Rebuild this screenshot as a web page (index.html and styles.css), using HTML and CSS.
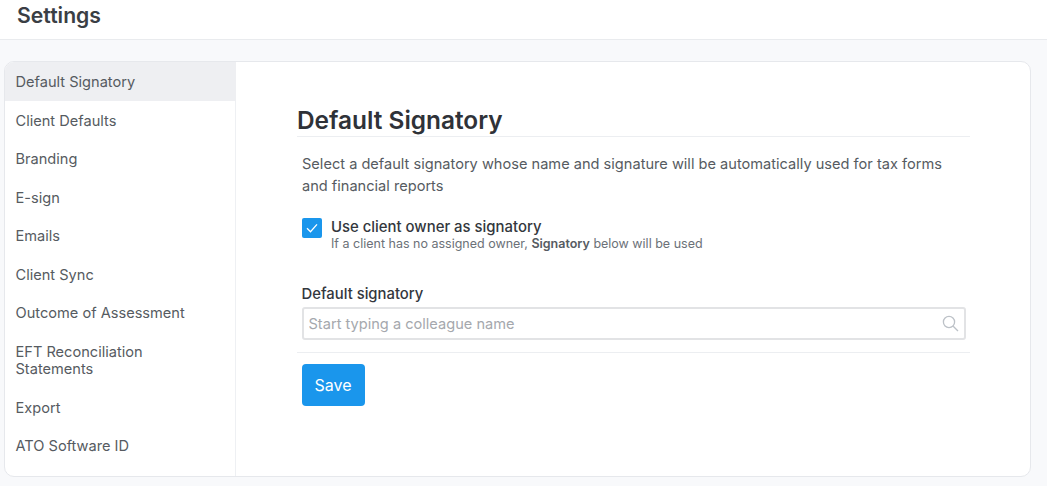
FILE: index.html
```html
<!DOCTYPE html>
<html lang="en">
<head>
  <meta charset="UTF-8" />
  <title>Settings</title>
  <meta name="viewport" content="width=device-width, initial-scale=1.0"/>
  <link rel="stylesheet" href="styles.css">
</head>
<body>
  <header class="page-header">
    <h1>Settings</h1>
  </header>

  <div class="settings-card">
    <nav class="side-nav">
      <a class="nav-item active" href="#">Default Signatory</a>
      <a class="nav-item" href="#">Client Defaults</a>
      <a class="nav-item" href="#">Branding</a>
      <a class="nav-item" href="#">E-sign</a>
      <a class="nav-item" href="#">Emails</a>
      <a class="nav-item" href="#">Client Sync</a>
      <a class="nav-item" href="#">Outcome of Assessment</a>
      <a class="nav-item" href="#">EFT Reconciliation Statements</a>
      <a class="nav-item" href="#">Export</a>
      <a class="nav-item" href="#">ATO Software ID</a>
    </nav>

    <main class="content">
      <h2>Default Signatory</h2>
      <p class="intro">Select a default signatory whose name and signature will be automatically used for tax forms and financial reports</p>

      <div class="check-row">
        <span class="checkbox">
          <svg width="12" height="12" viewBox="0 0 12 12" fill="none" stroke="#fff" stroke-width="1.3">
            <path d="M1 6.3 L4.5 9.8 L11 2.4"/>
          </svg>
        </span>
        <div>
          <div class="check-label">Use client owner as signatory</div>
          <div class="check-help">If a client has no assigned owner, <b>Signatory</b> below will be used</div>
        </div>
      </div>

      <label class="field-label" for="signatory">Default signatory</label>
      <div class="search-box">
        <input type="text" id="signatory" placeholder="Start typing a colleague name" />
        <svg width="17" height="17" viewBox="0 0 17 17" fill="none" stroke="#bcc1c7" stroke-width="1.3">
          <circle cx="7" cy="7" r="5.6"/>
          <path d="M11.2 11.2 L16 16"/>
        </svg>
      </div>

      <div class="actions">
        <button type="button">Save</button>
      </div>
    </main>
  </div>
</body>
</html>
```

FILE: styles.css
```css
:root {
  --bg: #f8f9fb;
  --border: #e6e8ec;
  --text: #33373d;
  --muted: #6c7178;
  --blue: #1a96ec;
}
* {
  box-sizing: border-box;
}
body {
  font-family: 'Inter', sans-serif;
  background-color: var(--bg);
  color: var(--text);
  margin: 0;
  height: 486px;
  overflow: hidden;
}
.page-header {
  background-color: #fff;
  height: 40px;
  border-bottom: 1px solid #e9ebee;
  padding-left: 17px;
}
.page-header h1 {
  margin: 0;
  font-size: 21.2px;
  font-weight: 600;
  line-height: 31px;
  color: #3a3e44;
}
.settings-card {
  display: flex;
  width: 1027px;
  height: 416px;
  margin: 21px 0 0 4px;
  background-color: #fff;
  border: 1px solid var(--border);
  border-radius: 10px;
  overflow: hidden;
}
.side-nav {
  width: 231px;
  flex-shrink: 0;
  border-right: 1px solid #eef0f3;
}
.nav-item {
  display: block;
  padding: 12px 30px 9px 10.5px;
  font-size: 14.6px;
  line-height: 17.5px;
  color: #565b61;
  text-decoration: none;
  margin-right: -1px;
}
.nav-item.active {
  background-color: #eeeff2;
}
.content {
  flex: 1;
  padding: 41px 60px 0 61px;
}
h2 {
  margin: 0;
  font-size: 24.4px;
  font-weight: 600;
  line-height: 35px;
  height: 34px;
  color: #2f3238;
  border-bottom: 1px solid #eceef1;
  width: 673px;
}
.intro {
  margin: 16px 0 0 5px;
  width: 660px;
  font-size: 14.6px;
  line-height: 22px;
  color: #565b61;
}
.check-row {
  display: flex;
  gap: 9px;
  margin: 20px 0 0 5px;
}
.checkbox {
  display: flex;
  align-items: center;
  justify-content: center;
  width: 20px;
  height: 20px;
  margin-top: 1px;
  background-color: var(--blue);
  border-radius: 2px;
}
.check-label {
  padding-top: 1px;
  font-size: 14.9px;
  font-weight: 500;
  line-height: 18px;
  color: var(--text);
}
.check-help {
  font-size: 12.5px;
  line-height: 16px;
  color: var(--muted);
}
.check-help b {
  font-weight: 600;
  color: #565b62;
}
.field-label {
  display: block;
  margin: 33px 0 0 4.5px;
  font-size: 14.85px;
  font-weight: 500;
  line-height: 18px;
  color: var(--text);
}
.search-box {
  display: flex;
  align-items: center;
  width: 664px;
  height: 33px;
  margin: 4px 0 0 5px;
  padding-right: 5px;
  border: 2px solid #e2e3e5;
  border-radius: 3px;
}
.search-box input {
  flex: 1;
  border: none;
  outline: none;
  padding: 0 4.5px;
  font-family: inherit;
  font-size: 14.6px;
  color: var(--text);
}
.search-box input::placeholder {
  color: #a5a8ad;
  opacity: 1;
}
.actions {
  width: 673px;
  margin-top: 12px;
  padding: 11px 0 0 5px;
  border-top: 1px solid #eceef1;
}
button {
  width: 63px;
  height: 42px;
  padding: 0 7px 0 6px;
  background-color: var(--blue);
  color: #fff;
  border: none;
  border-radius: 4px;
  font-family: inherit;
  font-size: 16px;
  cursor: pointer;
}
```
